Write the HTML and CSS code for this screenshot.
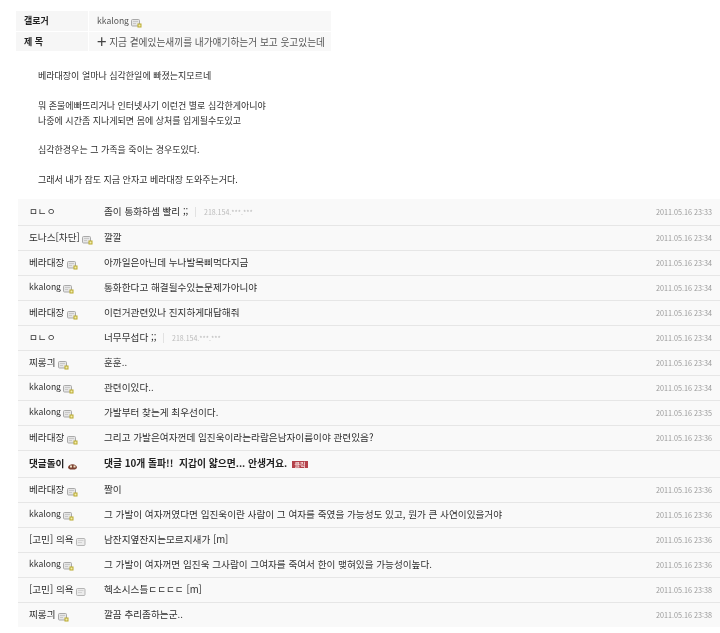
FILE: index.html
```html
<!DOCTYPE html>
<html lang="ko">
  <head>
    <meta charset="utf-8">
    <title>kkalong</title>
    <link rel="stylesheet" href="styles.css">
  </head>
  <body>
    <svg class="defs" width="0" height="0">
      <symbol id="gall" viewBox="0 0 11 10">
        <rect x="0.5" y="1.5" width="8" height="6.5" rx="1" fill="#e6e6e6" stroke="#a9a9a9"/>
        <path d="M2 3.5h5M2 5.5h3" stroke="#c8c8c8"/>
        <rect x="6.5" y="5.5" width="4" height="4" fill="#b9a92c"/>
        <rect x="7.5" y="6.5" width="2" height="2" fill="#f4edb0"/>
      </symbol>
      <symbol id="gall-gray" viewBox="0 0 11 10">
        <rect x="0.5" y="1.5" width="8.5" height="7" rx="1" fill="#ececec" stroke="#b5b5b5"/>
        <path d="M2 3.5h5.5M2 5.5h4" stroke="#d2d2d2"/>
      </symbol>
      <symbol id="bot" viewBox="0 0 11 10">
        <path d="M1 7 C1 2 10 2 10 7 L8 8.5 H3 Z" fill="#7a4030"/>
        <rect x="3" y="4.5" width="2" height="2" fill="#f1e3c8"/>
        <rect x="6.5" y="4.5" width="2" height="2" fill="#f1e3c8"/>
      </symbol>
    </svg>

    <div class="info">
      <div class="info-row">
        <div class="info-label">갤로거</div>
        <div class="info-value">kkalong <svg class="ico"><use href="#gall"/></svg></div>
      </div>
      <div class="info-row">
        <div class="info-label">제 목</div>
        <div class="info-value title"><span class="plus">+</span> 지금 곁에있는새끼를 내가얘기하는거 보고 웃고있는데</div>
      </div>
    </div>

    <div class="post">
      <p>베라대장이 얼마나 심각한일에 빠졌는지모르네</p>
      <p>뭐 존물에빠뜨리거나 인터넷사기 이런건 별로 심각한게아니야<br>나중에 시간좀 지나게되면 몸에 상처를 입게될수도있고</p>
      <p>심각한경우는 그 가족을 죽이는 경우도있다.</p>
      <p>그래서 내가 잠도 지금 안자고 베라대장 도와주는거다.</p>
    </div>

    <div class="comments">
      <div class="row first">
        <div class="name">ㅁㄴㅇ</div>
        <div class="msg">좀이 통화하셈 빨리 ;; <span class="ip">218.154.***.***</span></div>
        <div class="date">2011.05.16 23:33</div>
      </div>
      <div class="row">
        <div class="name">도나스[차단] <svg class="ico"><use href="#gall"/></svg></div>
        <div class="msg">깔깔</div>
        <div class="date">2011.05.16 23:34</div>
      </div>
      <div class="row">
        <div class="name">베라대장 <svg class="ico"><use href="#gall"/></svg></div>
        <div class="msg">아까일은아닌데 누나발목삐먹다지금</div>
        <div class="date">2011.05.16 23:34</div>
      </div>
      <div class="row">
        <div class="name en">kkalong <svg class="ico"><use href="#gall"/></svg></div>
        <div class="msg">통화한다고 해결될수있는문제가아니야</div>
        <div class="date">2011.05.16 23:34</div>
      </div>
      <div class="row">
        <div class="name">베라대장 <svg class="ico"><use href="#gall"/></svg></div>
        <div class="msg">이런거관련있나 진지하게대답해줘</div>
        <div class="date">2011.05.16 23:34</div>
      </div>
      <div class="row">
        <div class="name">ㅁㄴㅇ</div>
        <div class="msg">너무무섭다 ;; <span class="ip">218.154.***.***</span></div>
        <div class="date">2011.05.16 23:34</div>
      </div>
      <div class="row">
        <div class="name">찌롱긔 <svg class="ico"><use href="#gall"/></svg></div>
        <div class="msg">훈훈..</div>
        <div class="date">2011.05.16 23:34</div>
      </div>
      <div class="row">
        <div class="name en">kkalong <svg class="ico"><use href="#gall"/></svg></div>
        <div class="msg">관련이있다..</div>
        <div class="date">2011.05.16 23:34</div>
      </div>
      <div class="row">
        <div class="name en">kkalong <svg class="ico"><use href="#gall"/></svg></div>
        <div class="msg">가발부터 찾는게 최우선이다.</div>
        <div class="date">2011.05.16 23:35</div>
      </div>
      <div class="row">
        <div class="name">베라대장 <svg class="ico"><use href="#gall"/></svg></div>
        <div class="msg">그리고 가발은여자껀데 임진욱이라는라람은남자이름이야 관련있음?</div>
        <div class="date">2011.05.16 23:36</div>
      </div>
      <div class="row bot">
        <div class="name">댓글돌이 <svg class="ico"><use href="#bot"/></svg></div>
        <div class="msg">댓글 10개 돌파!!&nbsp; 지갑이 얇으면... 안생겨요. <span class="badge">클릭</span></div>
        <div class="date"></div>
      </div>
      <div class="row">
        <div class="name">베라대장 <svg class="ico"><use href="#gall"/></svg></div>
        <div class="msg">짤이</div>
        <div class="date">2011.05.16 23:36</div>
      </div>
      <div class="row">
        <div class="name en">kkalong <svg class="ico"><use href="#gall"/></svg></div>
        <div class="msg">그 가발이 여자꺼였다면 임진욱이란 사람이 그 여자를 죽였을 가능성도 있고, 뭔가 큰 사연이있을거야</div>
        <div class="date">2011.05.16 23:36</div>
      </div>
      <div class="row">
        <div class="name">[고민] 의욕 <svg class="ico"><use href="#gall-gray"/></svg></div>
        <div class="msg">남잔지옆잔지는모르지새가 [m]</div>
        <div class="date">2011.05.16 23:36</div>
      </div>
      <div class="row">
        <div class="name en">kkalong <svg class="ico"><use href="#gall"/></svg></div>
        <div class="msg">그 가발이 여자꺼면 임진욱 그사람이 그여자를 죽여서 한이 맺혀있을 가능성이높다.</div>
        <div class="date">2011.05.16 23:36</div>
      </div>
      <div class="row">
        <div class="name">[고민] 의욕 <svg class="ico"><use href="#gall-gray"/></svg></div>
        <div class="msg">헥소시스틀ㄷㄷㄷㄷ [m]</div>
        <div class="date">2011.05.16 23:38</div>
      </div>
      <div class="row last">
        <div class="name">찌롱긔 <svg class="ico"><use href="#gall"/></svg></div>
        <div class="msg">깔끔 추리좀하는군..</div>
        <div class="date">2011.05.16 23:38</div>
      </div>
    </div>
  </body>
</html>
```

FILE: styles.css
```css
html, body {
  margin: 0;
  padding: 0;
  background: #fff;
}

body {
  height: 633px;
  overflow: hidden;
  font-family: "Noto Sans CJK KR", "Noto Sans", sans-serif;
  font-size: 9px;
  color: #2f2f2f;
  filter: blur(0.4px);
}

.defs {
  display: block;
  height: 0;
}

.ico {
  width: 11px;
  height: 10px;
  vertical-align: -4px;
}

/* top info box */
.info {
  width: 315px;
  margin: 11px 0 0 16px;
}
.info-row {
  display: flex;
  height: 20px;
  line-height: 19px;
}
.info-label {
  width: 72px;
  padding-left: 8px;
  box-sizing: border-box;
  margin-right: 1px;
  background: #f6f6f6;
  font-weight: bold;
  color: #222;
}
.info-value {
  flex: 1;
  padding-left: 8px;
  background: #f8f8f8;
  color: #555;
  font-size: 8.6px;
}
.info-value.title {
  font-size: 9.7px;
  border-top: 1px solid #fff;
}
.info-row + .info-row .info-label {
  border-top: 1px solid #fff;
}
.plus {
  font-size: 17px;
  line-height: 1;
  color: #444;
  vertical-align: -2px;
}

/* post body */
.post {
  margin: 17px 0 0 38px;
  line-height: 15px;
  color: #2b2b2b;
}
.post p {
  margin: 0 0 14.5px;
}
.post p:last-child {
  margin-bottom: 12.5px;
}

/* comment list */
.comments {
  margin: 0 0 0 18px;
  background: #f9f9f9;
  font-size: 9.65px;
}
.row {
  display: flex;
  align-items: center;
  height: 25px;
  box-sizing: border-box;
  border-bottom: 1px solid #e6e6e6;
  padding: 0 0 2px 11px;
}
.row.first {
  height: 27px;
}
.row.bot {
  height: 27px;
  font-weight: bold;
  color: #222;
}
.row.bot .msg {
  font-size: 9.8px;
}
.row.last {
  border-bottom: 0;
  height: 24px;
}
.name {
  width: 75px;
  flex: none;
  white-space: nowrap;
}
.name.en {
  font-size: 8.6px;
}
.msg {
  flex: 1;
  white-space: nowrap;
}
.date {
  flex: none;
  width: 64px;
  padding-top: 2px;
  font-size: 7.2px;
  color: #999;
}
.ip {
  font-size: 7px;
  color: #bbb;
  margin-left: 4px;
  padding-left: 8px;
  border-left: 1px solid #e2e2e2;
}
.badge {
  display: inline-block;
  background: #b3414a;
  color: #f3d7d7;
  font-size: 6px;
  line-height: 7px;
  padding: 0 2px;
  margin-left: 2px;
  width: 12px;
  text-align: center;
}
```
